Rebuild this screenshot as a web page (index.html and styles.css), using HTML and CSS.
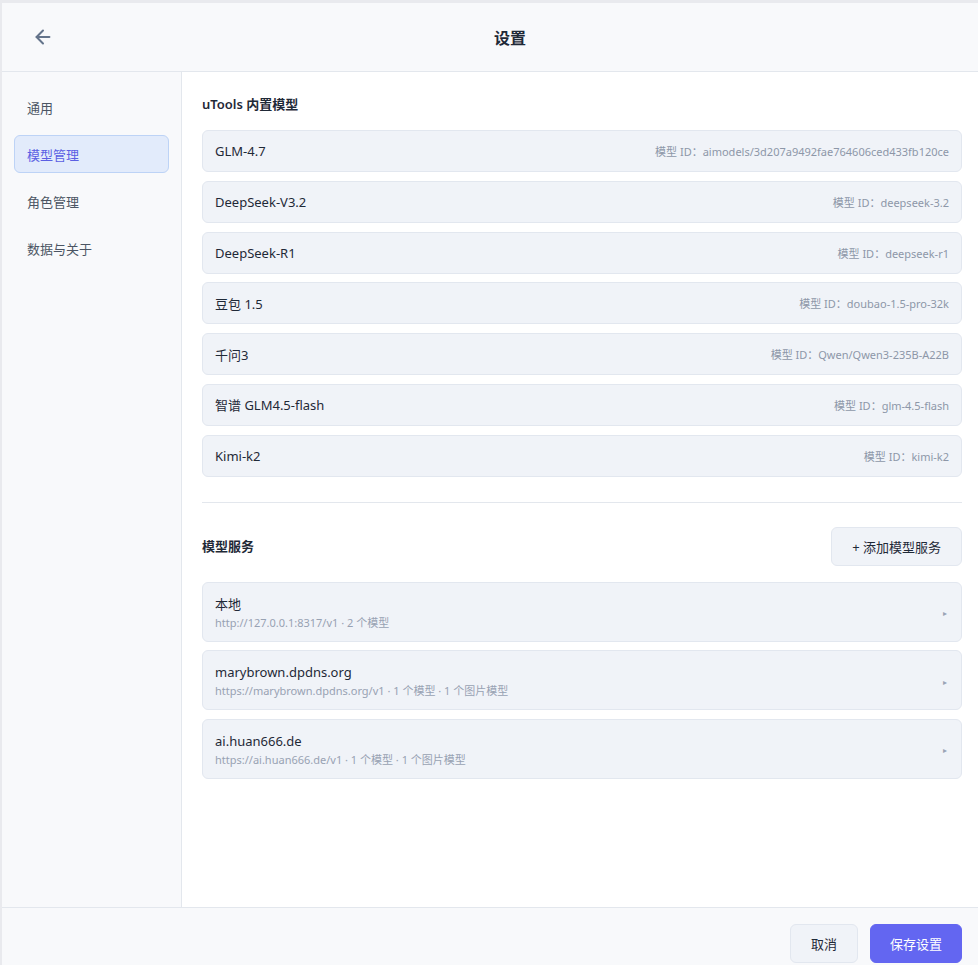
FILE: index.html
```html
<!DOCTYPE html>
<html>

<head>
    <meta charset="utf-8">
    <title>设置</title>
    <link rel="stylesheet" href="styles.css">
</head>

<body>
    <div class="modal">
        <div class="header">
            <button class="back">
                <svg width="22" height="22" viewBox="0 0 24 24" fill="none" stroke="#64748b" stroke-width="2.2"
                    stroke-linecap="round" stroke-linejoin="round">
                    <path d="M19 12H5" />
                    <path d="m12 19-7-7 7-7" />
                </svg>
            </button>
            <div class="title">设置</div>
            <div></div>
        </div>

        <div class="body">
            <div class="sidebar">
                <div class="navItem">通用</div>
                <div class="navItem active">模型管理</div>
                <div class="navItem">角色管理</div>
                <div class="navItem">数据与关于</div>
            </div>

            <div class="main">
                <div class="sectionTitle">uTools 内置模型</div>
                <div class="list" id="builtinList"></div>

                <div class="divider"></div>

                <div class="sectionRow">
                    <div class="sectionTitle">模型服务</div>
                    <button class="btn">+ 添加模型服务</button>
                </div>
                <div class="list services" id="serviceList"></div>
            </div>
        </div>

        <div class="footer">
            <button class="btn cancel">取消</button>
            <button class="btn primary">保存设置</button>
        </div>
    </div>

    <script>
        const builtinModels = [
            { name: 'GLM-4.7', id: 'aimodels/3d207a9492fae764606ced433fb120ce' },
            { name: 'DeepSeek-V3.2', id: 'deepseek-3.2' },
            { name: 'DeepSeek-R1', id: 'deepseek-r1' },
            { name: '豆包 1.5', id: 'doubao-1.5-pro-32k' },
            { name: '千问3', id: 'Qwen/Qwen3-235B-A22B' },
            { name: '智谱 GLM4.5-flash', id: 'glm-4.5-flash' },
            { name: 'Kimi-k2', id: 'kimi-k2' }
        ];

        const services = [
            { name: '本地', info: 'http://127.0.0.1:8317/v1 · 2 个模型' },
            { name: 'marybrown.dpdns.org', info: 'https://marybrown.dpdns.org/v1 · 1 个模型 · 1 个图片模型' },
            { name: 'ai.huan666.de', info: 'https://ai.huan666.de/v1 · 1 个模型 · 1 个图片模型' }
        ];

        const builtinList = document.getElementById('builtinList');
        builtinModels.forEach(model => {
            const row = document.createElement('div');
            row.className = 'card model';
            row.innerHTML = `
                <span class="name">${model.name}</span>
                <span class="modelId">模型 ID：${model.id}</span>
            `;
            builtinList.appendChild(row);
        });

        const serviceList = document.getElementById('serviceList');
        services.forEach(service => {
            const row = document.createElement('div');
            row.className = 'card service';
            row.innerHTML = `
                <div>
                    <div class="name">${service.name}</div>
                    <div class="info">${service.info}</div>
                </div>
                <span class="caret">▸</span>
            `;
            serviceList.appendChild(row);
        });
    </script>
</body>

</html>
```

FILE: styles.css
```css
* {
    box-sizing: border-box;
}

html,
body {
    margin: 0;
    height: 100%;
    overflow: hidden;
}

body {
    background: #e9eaee;
    font-family: "Noto Sans", "Noto Sans CJK SC", sans-serif;
    color: #1f2937;
}

button {
    font-family: inherit;
}

.modal {
    margin: 3px 0 0 2px;
    height: calc(100% - 3px);
    display: flex;
    flex-direction: column;
    background: #f8f9fb;
}

.header {
    height: 69px;
    flex-shrink: 0;
    display: grid;
    grid-template-columns: 1fr auto 1fr;
    align-items: center;
    padding: 0 20px;
    border-bottom: 1px solid #e3e7ed;
}

.back {
    width: 30px;
    height: 30px;
    padding: 0;
    margin-left: 6px;
    border: none;
    background: none;
    display: flex;
    align-items: center;
    justify-content: center;
    cursor: pointer;
}

.title {
    padding-left: 40px;
    font-size: 16px;
    font-weight: 700;
    color: #1f2937;
}

.body {
    flex: 1;
    display: flex;
    min-height: 0;
}

.sidebar {
    width: 180px;
    flex-shrink: 0;
    padding: 16px 12px;
    border-right: 1px solid #e3e7ed;
    display: flex;
    flex-direction: column;
    gap: 9px;
}

.navItem {
    height: 38px;
    padding: 0 12px;
    display: flex;
    align-items: center;
    font-size: 13px;
    color: #4b5563;
    border: 1px solid transparent;
    border-radius: 6px;
}

.navItem.active {
    background: #e2ebfb;
    border-color: #bdd3f6;
    color: #5b5fe3;
}

.main {
    flex: 1;
    background: #fff;
    padding: 22px 16px 20px 20px;
}

.sectionTitle {
    font-size: 13px;
    font-weight: 600;
    line-height: 20px;
    color: #1f2937;
}

.main > .sectionTitle {
    margin-bottom: 16px;
}

.list {
    display: flex;
    flex-direction: column;
    gap: 8.8px;
}

.card {
    background: #f0f3f8;
    border: 1px solid #e2e7ef;
    border-radius: 6px;
    display: flex;
    align-items: center;
    justify-content: space-between;
    padding: 0 12px 0 12px;
}

.model {
    height: 42px;
}

.model .name {
    font-size: 13px;
    color: #1f2937;
}

.modelId {
    font-size: 11px;
    color: #8d97a8;
}

.divider {
    height: 1px;
    background: #e3e7ed;
    margin: 25px 0 24px;
}

.sectionRow {
    display: flex;
    align-items: center;
    justify-content: space-between;
    margin-bottom: 16px;
}

.btn {
    height: 39px;
    padding: 0 20px;
    font-size: 13px;
    color: #1f2937;
    background: #f0f3f8;
    border: 1px solid #e2e7ef;
    border-radius: 6px;
    cursor: pointer;
}

.btn.cancel {
    width: 68px;
    padding: 0;
}

.btn.primary {
    width: 92px;
    padding: 0;
    background: #6366f1;
    border-color: #6366f1;
    color: #fff;
}

.services {
    gap: 8.5px;
}

.service {
    height: 60px;
    padding-top: 2px;
}

.service .name {
    font-size: 13px;
    line-height: 20px;
    color: #1f2937;
}

.info {
    font-size: 11px;
    line-height: 18px;
    color: #98a2b3;
}

.caret {
    font-size: 8px;
    color: #9aa4b6;
    margin-right: 2px;
}

.footer {
    flex-shrink: 0;
    height: 58px;
    padding: 16px 16px 0;
    border-top: 1px solid #e3e7ed;
    display: flex;
    justify-content: flex-end;
    align-items: flex-start;
    gap: 12px;
}
```
